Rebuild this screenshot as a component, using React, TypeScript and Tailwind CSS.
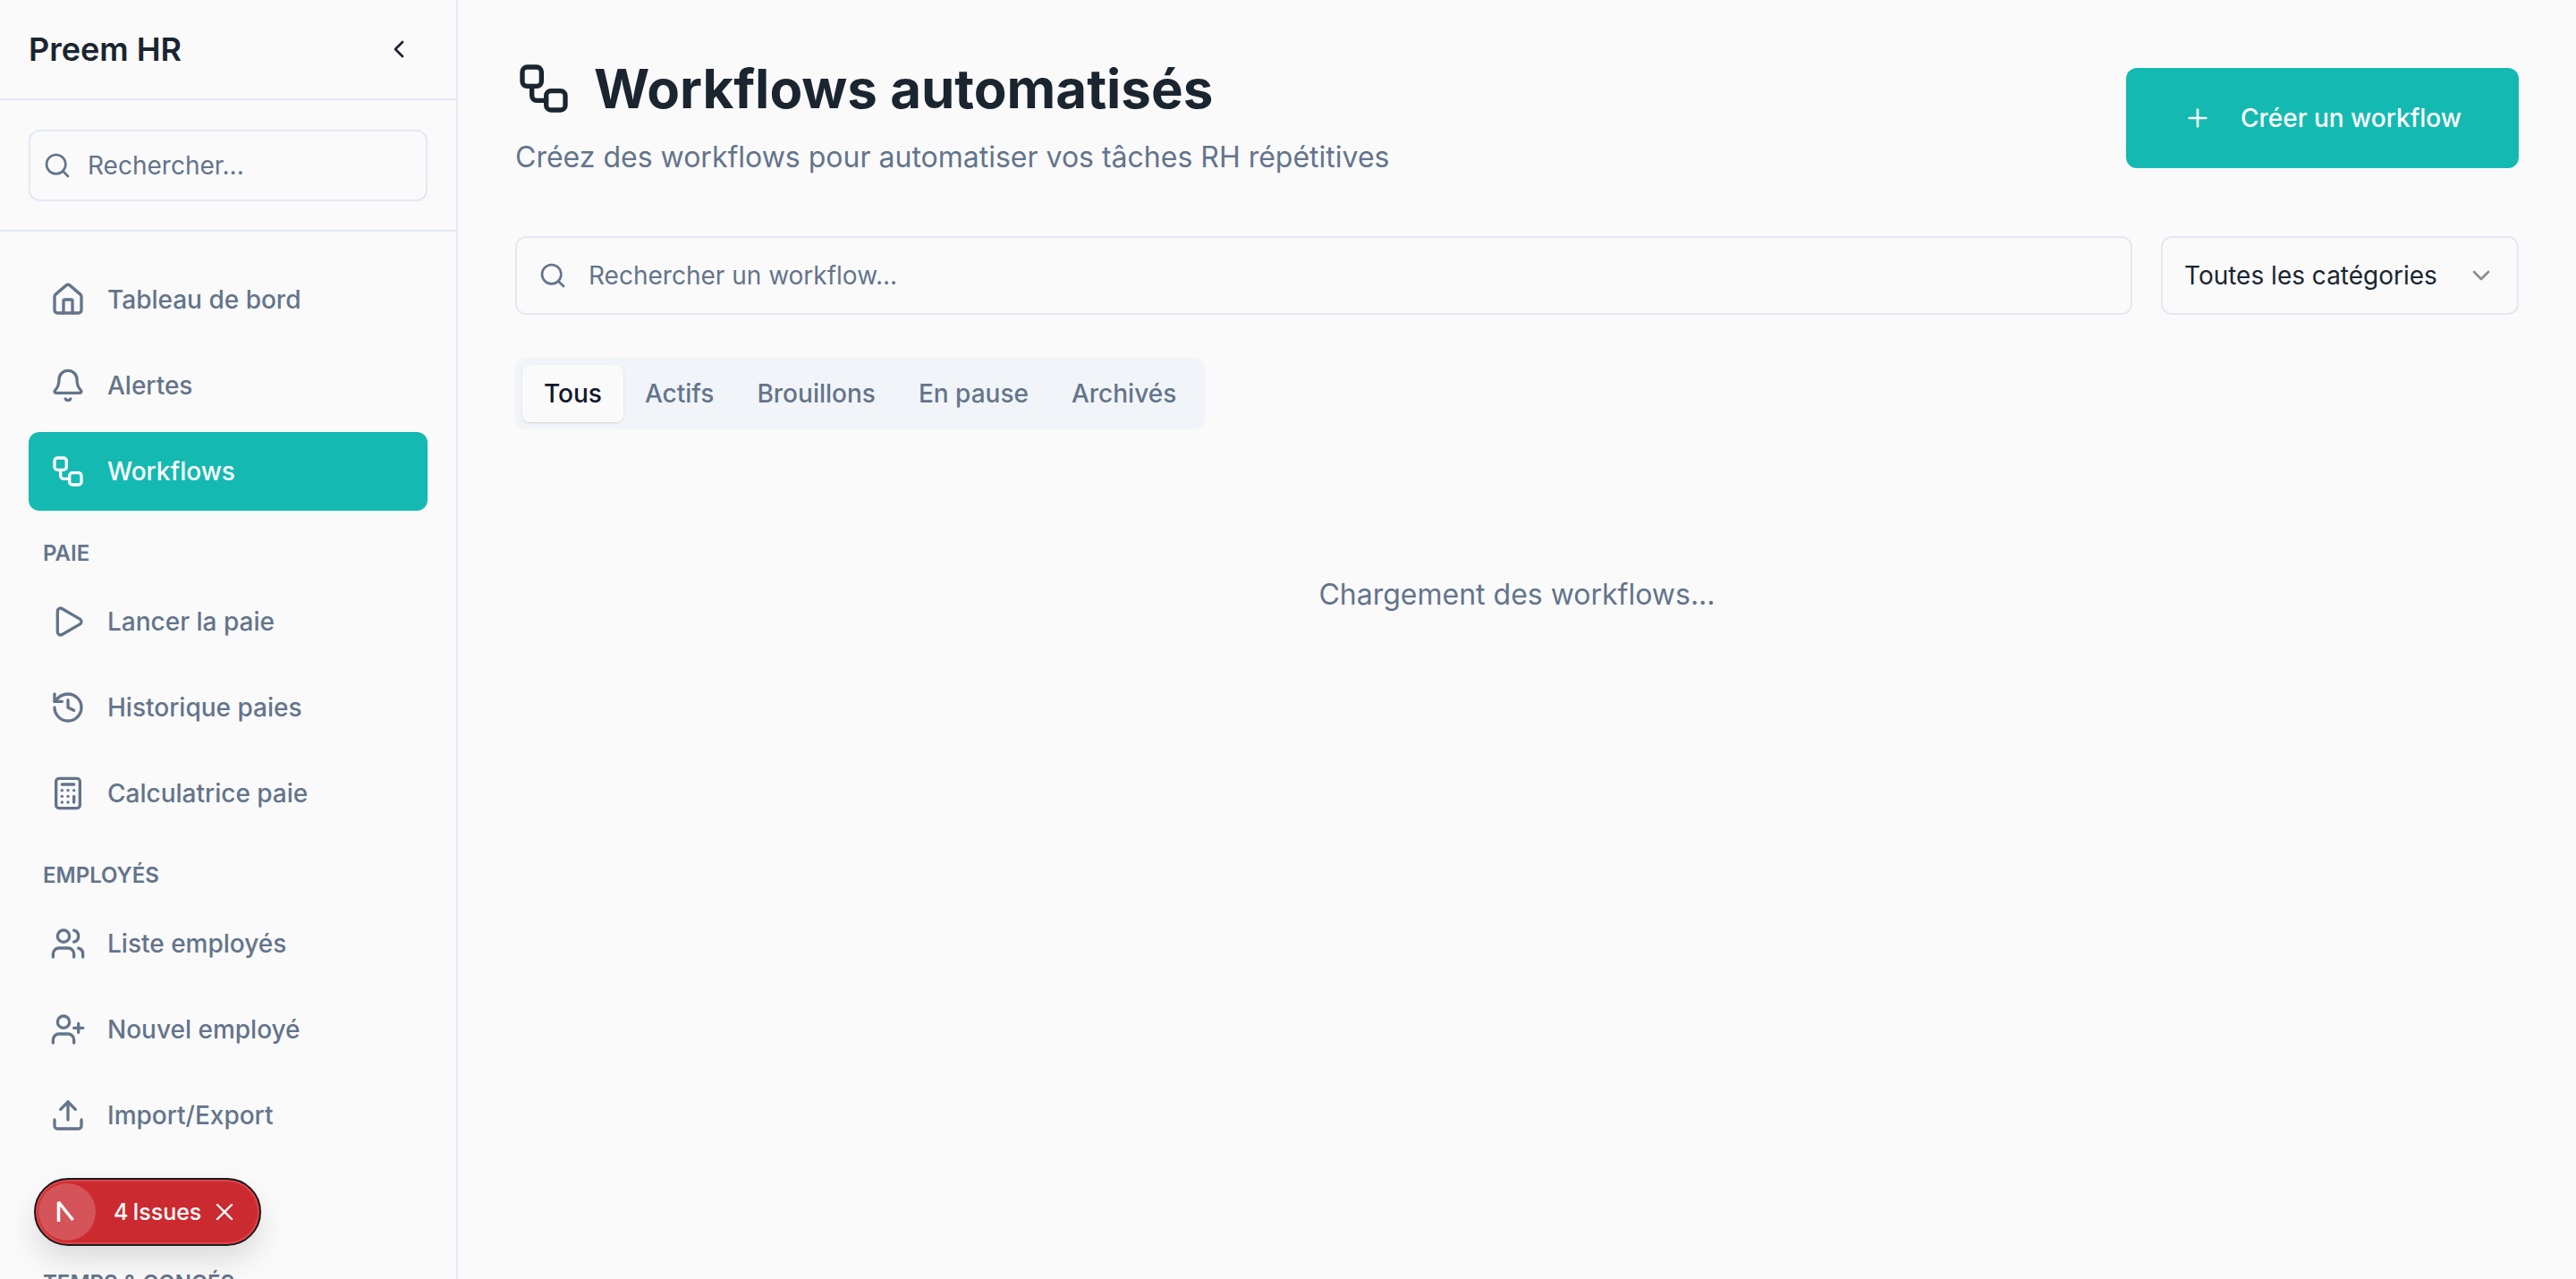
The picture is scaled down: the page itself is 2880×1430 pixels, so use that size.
import React from 'react';
import {
  Bell,
  Calculator,
  ChevronDown,
  ChevronLeft,
  History,
  House,
  Play,
  Plus,
  Search,
  Upload,
  UserPlus,
  Users,
  Workflow,
  X,
} from 'lucide-react';

const groups = [
  {
    items: [
      { label: 'Tableau de bord', icon: House },
      { label: 'Alertes', icon: Bell },
      { label: 'Workflows', icon: Workflow, active: true },
    ],
  },
  {
    title: 'Paie',
    items: [
      { label: 'Lancer la paie', icon: Play },
      { label: 'Historique paies', icon: History },
      { label: 'Calculatrice paie', icon: Calculator },
    ],
  },
  {
    title: 'Employés',
    items: [
      { label: 'Liste employés', icon: Users },
      { label: 'Nouvel employé', icon: UserPlus },
      { label: 'Import/Export', icon: Upload },
    ],
  },
];

const tabs = ['Tous', 'Actifs', 'Brouillons', 'En pause', 'Archivés'];

function Sidebar() {
  return (
    <aside className="flex h-full w-[512px] shrink-0 flex-col overflow-hidden border-r-2 border-[#e3e8f3]">
      <div className="flex h-[112px] shrink-0 items-center justify-between border-b-2 border-[#e3e8f3] pl-8 pr-[48px]">
        <span className="text-[36px] font-semibold leading-none text-[#1a2530]">Preem HR</span>
        <ChevronLeft className="h-8 w-8 text-[#1a2530]" />
      </div>

      <div className="shrink-0 border-b-2 border-[#e3e8f3] px-8 pb-8 pt-[33px]">
        <div className="flex h-20 items-center gap-[18px] rounded-xl border-2 border-[#e3e8f3] pl-[14px]">
          <Search className="h-8 w-8 shrink-0 text-[#64748b]" />
          <input
            placeholder="Rechercher..."
            className="w-full bg-transparent text-[28px] text-[#1a2530] outline-none placeholder:text-[#64748b]"
          />
        </div>
      </div>

      <nav className="flex flex-col px-8 pt-8">
        {groups.map((group) => (
          <div key={group.title ?? 'main'} className="flex flex-col gap-2">
            {group.title && (
              <div className="mb-[8px] mt-[32px] px-4 text-[24px] font-semibold uppercase leading-8 text-[#64748b]">
                {group.title}
              </div>
            )}
            {group.items.map((item) => (
              <a
                key={item.label}
                className={
                  item.active
                    ? 'flex h-[88px] items-center gap-6 rounded-xl bg-[#14bab2] px-6 text-[28px] font-medium text-white'
                    : 'flex h-[88px] items-center gap-6 rounded-xl px-6 text-[28px] font-medium text-[#64748b]'
                }
              >
                <item.icon className="h-10 w-10 shrink-0" />
                {item.label}
              </a>
            ))}
          </div>
        ))}
        <div className="mt-2 h-[88px] shrink-0" />
        <div className="mt-[32px] px-4 text-[24px] font-semibold uppercase leading-8 text-[#64748b]">
          Temps &amp; congés
        </div>
      </nav>
    </aside>
  );
}

function IssuesBadge() {
  return (
    <div className="absolute bottom-[37px] left-[38px] flex h-[76px] w-[254px] items-center rounded-full border-2 border-[#1c1c1c] bg-[#cb2a30] pl-[3px] text-white shadow-[inset_0_0_0_2px_#e0454b,0_16px_32px_rgba(0,0,0,0.12)]">
      <div className="flex h-[64px] w-[64px] shrink-0 items-center justify-center rounded-full bg-white/20">
        <svg width="32" height="32" viewBox="0 0 32 32" fill="none" stroke="white" strokeWidth="3.5" strokeLinejoin="bevel">
          <path d="M6.5 27V5L22.5 25" />
        </svg>
      </div>
      <span className="ml-[20px] flex gap-[5px] text-[25px] font-medium leading-none">
        <span>4</span>
        <span>Issues</span>
      </span>
      <X className="ml-[10px] h-8 w-8" strokeWidth={1.75} />
    </div>
  );
}

export default function App() {
  return (
    <div className="relative flex h-screen w-full overflow-hidden bg-[#fafafb] font-['Inter',sans-serif]">
      <Sidebar />

      <main className="min-w-0 flex-1 px-16 pt-[76px]">
        <div className="flex items-start justify-between">
          <div>
            <div className="flex h-[46px] items-center gap-6">
              <Workflow className="h-16 w-16 text-[#1a2530]" />
              <h1 className="text-[60px] font-bold leading-none text-[#1a2530]">Workflows automatisés</h1>
            </div>
            <p className="mt-[30px] text-[32px] leading-[48px] text-[#64748b]">
              Créez des workflows pour automatiser vos tâches RH répétitives
            </p>
          </div>
          <button className="flex h-[112px] items-center gap-8 rounded-xl bg-[#14bab2] px-16 text-[28px] font-medium text-white">
            <Plus className="h-8 w-8" />
            Créer un workflow
          </button>
        </div>

        <div className="mt-[64px] flex gap-8">
          <div className="flex h-[88px] flex-1 items-center gap-6 rounded-xl border-2 border-[#e3e8f3] pl-6">
            <Search className="h-8 w-8 shrink-0 text-[#64748b]" />
            <input
              placeholder="Rechercher un workflow..."
              className="w-full bg-transparent text-[28px] text-[#1a2530] outline-none placeholder:text-[#64748b]"
            />
          </div>
          <div className="flex h-[88px] w-[400px] items-center justify-between rounded-xl border-2 border-[#e3e8f3] pl-6 pr-6 text-[28px] text-[#1a2530]">
            Toutes les catégories
            <ChevronDown className="h-8 w-8 text-[#1a2530] opacity-50" />
          </div>
        </div>

        <div className="mt-12 inline-flex h-20 items-center rounded-xl bg-[#f1f5f9] p-2">
          {tabs.map((tab, i) => (
            <div
              key={tab}
              className={
                i === 0
                  ? 'flex h-16 items-center rounded-lg bg-[#fafafb] px-6 text-[28px] font-medium text-[#0f172a] shadow-sm'
                  : 'flex h-16 items-center px-6 text-[28px] font-medium text-[#64748b]'
              }
            >
              {tab}
            </div>
          ))}
        </div>

        <div className="mt-[161px] text-center text-[32px] leading-12 text-[#64748b]">Chargement des workflows...</div>
      </main>

      <IssuesBadge />
    </div>
  );
}
